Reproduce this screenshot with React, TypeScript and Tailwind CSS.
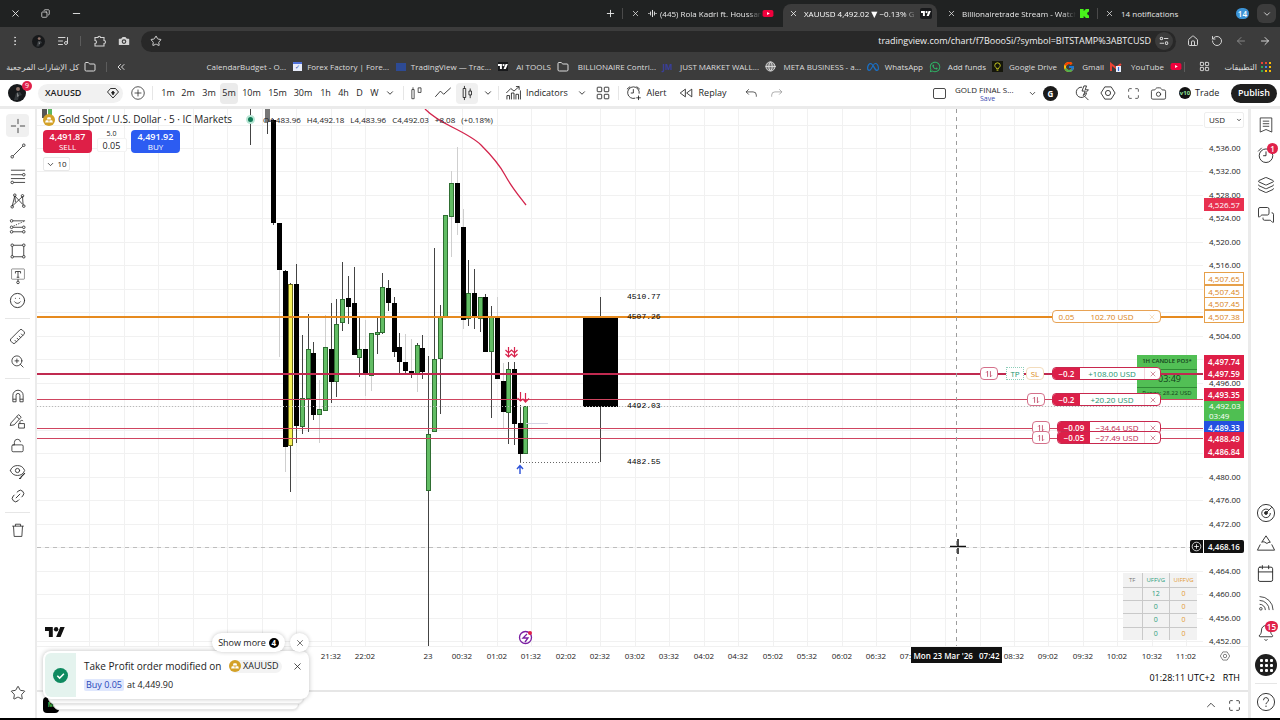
import type { ReactNode } from 'react'
import {
  ArrowLeft,
  ArrowRight,
  Bell,
  Calendar,
  Camera,
  ChevronDown,
  ChevronUp,
  ChevronsLeft,
  Copy,
  EllipsisVertical,
  Eye,
  Folder,
  Globe,
  House,
  Layers,
  LayoutGrid,
  Link2,
  ListMusic,
  LockOpen,
  Maximize,
  MessagesSquare,
  Minus,
  Plus,
  RotateCcw,
  Ruler,
  Smile,
  Star,
  X,
  ZoomIn,
} from 'lucide-react'
import { FcGoogle } from 'react-icons/fc'
import { FaMeta, FaWhatsapp } from 'react-icons/fa6'

/** Outline icon on a 28 unit box, the size the trading toolbars are drawn on. */
function Icon({ children, className = 'size-[18px]' }: { children: ReactNode; className?: string }) {
  return (
    <svg viewBox="0 0 28 28" fill="none" stroke="currentColor" strokeWidth="1.3" className={className}>
      {children}
    </svg>
  )
}

function TvLogo({ className }: { className: string }) {
  return (
    <svg viewBox="0 4 36 18" fill="currentColor" className={className}>
      <path d="M14 22H7V11H0V4h14v18zM28 22h-8l7.5-18h8L28 22z" />
      <circle cx="20" cy="8" r="4" />
    </svg>
  )
}

function YouTubeMark() {
  return (
    <svg viewBox="0 0 12 10" className="h-[9px] w-3 shrink-0">
      <rect y="1" width="12" height="8" rx="2" fill="#f0003c" />
      <path d="M5 3.2v3.6L8 5z" fill="#fff" />
    </svg>
  )
}

function GoldMark() {
  return (
    <svg viewBox="0 0 12 12" className="size-3 shrink-0">
      <circle cx="6" cy="6" r="6" fill="#d3a127" />
      <path d="M4.6 3.2h2.8l.8 2.2H3.8zM2.8 6.2h2.6l.5 2.3H2.1zM6.6 6.2h2.6l.7 2.3H6.1z" fill="#fff" />
    </svg>
  )
}

function Avatar({ className }: { className: string }) {
  return (
    <svg viewBox="0 0 18 18" className={className}>
      <circle cx="9" cy="9" r="9" fill="#17191b" />
      <circle cx="10" cy="5" r="2" fill="#8d7268" />
      <path d="M6 16l2-7 4-1 2 3-3 1-1 4z" fill="#34383b" />
      <path d="M9.5 8l1 4-1 1z" fill="#d5d5d5" />
    </svg>
  )
}

function SettingsIcon({ className }: { className?: string }) {
  return (
    <Icon className={className}>
      <path d="M9 4.5h10L25 14l-6 9.500H9L3 14z" />
      <circle cx="14" cy="14" r="4" />
    </Icon>
  )
}

/* ---------- browser chrome ---------- */

function TabStrip() {
  return (
    <div className="flex h-[27px] items-stretch bg-[#202222] text-[8px] text-[#e8e8e8]">
      <div className="flex items-center pl-1">
        <button aria-label="Close" className="flex w-[30px] justify-center pr-2"><X className="size-[11px]" /></button>
        <button aria-label="Restore" className="flex w-[23px] justify-center"><Copy className="size-[9px] -scale-x-100" /></button>
        <button aria-label="Minimize" className="flex w-[38px] justify-center"><Minus className="size-[11px]" /></button>
      </div>
      <button aria-label="New tab" className="ml-auto flex w-6 items-center justify-center"><Plus className="size-[11px]" /></button>
      <div className="my-2 w-px bg-[#4a4a4a]" />
      <div className="flex w-40 items-center pl-2">
        <X className="size-[9px] shrink-0" />
        <Icon className="ml-2 size-[9px] shrink-0">
          <path d="M1 14h4M8 8v12M14 3v22M20 8v12M23 14h4" strokeWidth="3" />
        </Icon>
        <span className="ml-[3px] w-[102px] overflow-hidden whitespace-nowrap [mask-image:linear-gradient(to_right,black_85%,transparent)]">
          (445) Rola Kadri ft. Houssam
        </span>
        <YouTubeMark />
      </div>
      <div className="mt-1 flex w-[154px] items-center rounded-t-lg bg-[#3c3c3c] pb-1 pl-[6px] text-white">
        <X className="size-[9px] shrink-0" />
        <span className="ml-[6px] w-[113px] overflow-hidden whitespace-nowrap [mask-image:linear-gradient(to_right,black_88%,transparent)]">
          XAUUSD 4,492.02 ▼ −0.13% G
        </span>
        <span className="ml-[3px] rounded-xs bg-[#18191b] px-px py-[3px]"><TvLogo className="h-[5px] w-[10px]" /></span>
      </div>
      <div className="flex w-[160px] items-center pl-[10px]">
        <X className="size-[9px] shrink-0" />
        <span className="ml-[6px] w-[114px] overflow-hidden whitespace-nowrap [mask-image:linear-gradient(to_right,black_88%,transparent)]">
          Billionairetrade Stream - Watch
        </span>
        <svg viewBox="0 0 10 10" className="ml-1 size-[9px] shrink-0" fill="#48f31b">
          <path d="M0 0h4v2h1V1h1V0h4v3H9v1H8v2h1v1h1v3H6V9H5V8H4v2H0z" />
        </svg>
      </div>
      <div className="my-2 w-px bg-[#4a4a4a]" />
      <div className="flex w-[155px] items-center pl-[7px]">
        <X className="size-[9px]" />
        <span className="ml-[7px]">14 notifications</span>
        <span className="mr-1 ml-auto rounded-full bg-[#3c93d6] px-[2px] leading-[11px] font-semibold text-white">14</span>
      </div>
      <button aria-label="Search tabs" className="mt-1 mr-1 ml-1 flex h-[19px] w-[19px] items-center justify-center rounded-md bg-[#3c3c3c]">
        <ChevronDown className="size-[10px]" />
      </button>
    </div>
  )
}

function AddressBar() {
  return (
    <div className="flex h-7 items-center bg-[#3c3c3c] text-[#d4d4d4]">
      <div className="flex w-[141px] items-center pl-[9px]">
        <EllipsisVertical className="size-3" />
        <Avatar className="ml-[11px] size-[13px]" />
        <ListMusic className="ml-3 size-3" />
        <span className="ml-[11px] h-[10px] w-px bg-[#5c5c5c]" />
        <Icon className="ml-3 size-[14px]">
          <path d="M4 7h6a2.500 2.500 0 0 1 5 0h7v6a3 3 0 0 1 0 6v5H4v-5a3 3 0 0 0 0-6z" strokeWidth="2.200" />
        </Icon>
        <Camera className="ml-[10px] size-[14px] fill-[#d4d4d4] stroke-[#3c3c3c]" />
      </div>
      <div className="flex h-[21px] min-w-0 flex-1 items-center rounded-full bg-[#282828] pr-[3px] pl-[9px]">
        <Star className="size-3" />
        <input
          aria-label="Address"
          dir="ltr"
          defaultValue="tradingview.com/chart/f7BoooSi/?symbol=BITSTAMP%3ABTCUSD"
          className="min-w-0 flex-1 bg-transparent pr-1 text-right text-[9px] text-[#f0f0f0] outline-none"
        />
        <button aria-label="Site settings" className="flex size-[18px] items-center justify-center rounded-full bg-[#3c3c3c]">
          <Icon className="size-3">
            <g strokeWidth="2.400">
              <circle cx="8" cy="8" r="3" /><path d="M14 8h10M4 19h10" /><circle cx="20" cy="19" r="3" />
            </g>
          </Icon>
        </button>
      </div>
      <div className="flex w-[104px] items-center justify-between pr-[9px] pl-[11px]">
        <House className="size-3" />
        <RotateCcw className="size-3" />
        <ArrowLeft className="size-3 text-[#858585]" />
        <ArrowRight className="size-3" />
      </div>
    </div>
  )
}

const BOOKMARKS = [
  { label: 'CalendarBudget - O...', width: 'w-[100px]', icon: <span className="flex size-[9px] items-center justify-center border-t-2 border-[#4f70d8] bg-[#e7ecfa] text-[6px] text-[#334ea8]">✓</span> },
  { label: 'Forex Factory | Fore...', width: 'w-[103px]', icon: <span className="h-[8px] w-[10px] bg-[#2d4a94]" /> },
  { label: 'TradingView — Trac...', width: 'w-[102px]', icon: <span className="bg-[#18191b] py-[2px] text-white"><TvLogo className="h-[5px] w-[10px]" /></span> },
  { label: 'AI TOOLS', width: 'w-[60px]', icon: <Folder className="size-3" /> },
  { label: 'BILLIONAIRE Contri...', width: 'w-[105px]', icon: <span className="font-bold text-[#3a3f9c]">JM</span> },
  { label: 'JUST MARKET WALL...', width: 'w-[103px]', icon: <Globe className="size-[11px] fill-[#777]" /> },
  { label: 'META BUSINESS - a...', width: 'w-[102px]', icon: <FaMeta className="size-3 text-[#1a6fc4]" /> },
  { label: 'WhatsApp', width: 'w-[62px]', icon: <FaWhatsapp className="size-3 text-[#2fb565]" /> },
  {
    label: 'Add funds', width: 'w-[63px]', icon: (
      <svg viewBox="0 0 12 12" className="size-[11px]">
        <rect width="12" height="12" fill="#15160c" />
        <path d="M3 5a3 3 0 0 1 6 0c0 1.500-2 2-2 3.500H5C5 7 3 6.500 3 5zM5 10h2" fill="none" stroke="#d3d321" />
      </svg>
    ),
  },
  { label: 'Google Drive', width: 'w-[71px]', icon: <FcGoogle className="size-3" /> },
  {
    label: 'Gmail', width: 'w-[47px]', icon: (
      <svg viewBox="0 0 12 10" className="h-[10px] w-3">
        <path d="M1 9V2l5 4 5-4" fill="none" stroke="#ea4335" strokeWidth="2" />
        <rect x="6" y="4" width="5" height="6" fill="#e8eefc" />
        <path d="M8.500 5v4" stroke="#3367d6" strokeWidth="1.200" />
      </svg>
    ),
  },
  { label: 'YouTube', width: 'w-[60px]', icon: <YouTubeMark /> },
]

const APP_DOTS = ['#ea4335', '#ea4335', '#fbbc05', '#34a853', '#4285f4', '#fbbc05', '#34a853', '#fbbc05', '#fbbc05']

function BookmarkBar() {
  return (
    <div className="flex h-[25px] items-center bg-[#3c3c3c] pb-[2px] text-[8px] whitespace-nowrap text-[#dcdcdc]">
      <a href="#all" dir="rtl" className="w-[80px] pr-px">كل الإشارات المرجعية</a>
      <Folder className="ml-1 size-3" />
      <span className="ml-[10px] h-[10px] w-px bg-[#5c5c5c]" />
      <ChevronsLeft className="ml-2 size-3" />
      <div className="ml-auto flex">
        {BOOKMARKS.map((b) => (
          <a key={b.label} href="#bookmark" className={`flex shrink-0 items-center justify-end ${b.width}`}>
            <span>{b.label}</span>
            <span className="ml-[5px] flex w-[13px] shrink-0 justify-center">{b.icon}</span>
          </a>
        ))}
      </div>
      <span className="ml-[2px] h-[10px] w-px bg-[#5c5c5c]" />
      <LayoutGrid className="ml-[14px] size-[11px]" />
      <a href="#apps" className="ml-2 flex w-[62px] items-center justify-end gap-1 pr-[9px]">
        <span dir="rtl">التطبيقات</span>
        <svg viewBox="0 0 10 10" className="size-[10px] shrink-0">
          {APP_DOTS.map((c, i) => (
            <rect key={i} x={(i % 3) * 4} y={Math.floor(i / 3) * 4} width="2" height="2" fill={c} />
          ))}
        </svg>
      </a>
    </div>
  )
}

/* ---------- top toolbar ---------- */

const INTERVALS = [
  { label: '1m', width: 'w-5' },
  { label: '2m', width: 'w-5' },
  { label: '3m', width: 'w-[22px]' },
  { label: '5m', width: 'w-[18px] rounded-sm bg-[#ebebeb]' },
  { label: '10m', width: 'w-[27px]' },
  { label: '15m', width: 'w-[25px]' },
  { label: '30m', width: 'w-[26px]' },
  { label: '1h', width: 'w-[19px]' },
  { label: '4h', width: 'w-[17px]' },
  { label: 'D', width: 'w-[15px]' },
  { label: 'W', width: 'w-[15px]' },
]

function Divider() {
  return <span className="h-[14px] w-px shrink-0 bg-[#e6e6e6]" />
}

function TopToolbar() {
  return (
    <div className="flex h-[29px] items-center border-b-3 border-[#ebebeb] bg-white text-[9px] whitespace-nowrap text-[#1c1c1c]">
      <div className="relative ml-2 size-[18px] shrink-0">
        <Avatar className="size-[18px]" />
        <span className="absolute -top-[3px] left-[14px] size-[10px] rounded-full bg-[#e0214a] text-center text-[7px] leading-[10px] text-white">9</span>
      </div>
      <button className="ml-3 flex h-[19px] w-[85px] shrink-0 items-center rounded-full bg-[#f1f1f1] pl-[7px] font-semibold">
        XAUUSD
        <Icon className="mr-[3px] ml-auto size-[14px]">
          <path d="M9 5h10l6 7-11 12L3 12z" strokeWidth="1.800" /><path d="M14 10l3 3-3 5-3-5z" fill="currentColor" />
        </Icon>
      </button>
      <button aria-label="Compare symbol" className="ml-[6px] flex w-[17px] justify-center">
        <Icon className="size-4"><circle cx="14" cy="14" r="11" /><path d="M14 8v12M8 14h12" /></Icon>
      </button>
      <span className="w-[6px]" />
      <Divider />
      <span className="w-[5px]" />
      {INTERVALS.map((i) => (
        <button key={i.label} className={`h-[21px] shrink-0 text-center ${i.width}`}>{i.label}</button>
      ))}
      <button aria-label="More intervals" className="flex w-[15px] justify-center"><ChevronDown className="size-[10px]" /></button>
      <span className="w-[6px]" />
      <Divider />
      <button aria-label="Bars" className="flex w-[26px] justify-center">
        <Icon className="size-4"><path d="M5 8h4v16H5zM7 8V4M16 5h5v8h-5z" /></Icon>
      </button>
      <button aria-label="Line" className="flex w-[26px] justify-center">
        <Icon><path d="M2 20l8-9 5 5L26 6" /></Icon>
      </button>
      <button aria-label="Candles" className="flex h-[21px] w-[22px] items-center justify-center rounded-sm bg-[#f0f0f0]">
        <Icon><path d="M8 7h4v14H8zM10 3v4M10 21v4M17 11h4v6h-4zM19 7v4M19 17v5" /></Icon>
      </button>
      <button aria-label="Chart types" className="flex w-5 items-center justify-center"><ChevronDown className="size-[10px]" /></button>
      <Divider />
      <button className="ml-[6px] flex items-center">
        <Icon><path d="M3 24v-6h4v6M10 24V14h4v10M17 24v-8h4v8M24 24V10M2 14l7-7 5 4 8-7M17 4h5v5" /></Icon>
        <span className="ml-[3px] w-[42px] text-left">Indicators</span>
      </button>
      <ChevronDown className="ml-[9px] size-[10px]" />
      <button aria-label="Templates" className="ml-[7px]">
        <Icon><rect x="5" y="5" width="7" height="7" rx="1" /><rect x="16" y="5" width="7" height="7" rx="1" /><rect x="5" y="16" width="7" height="7" rx="1" /><rect x="16" y="16" width="7" height="7" rx="1" /></Icon>
      </button>
      <span className="w-[6px]" />
      <Divider />
      <button className="ml-[6px] flex items-center">
        <Icon><path d="M22 15a9 9 0 1 0-6 7M13 8v6H9M3 8l5-4M18 4l5 4M21 18v7M17.500 21.500h7" /></Icon>
        <span className="ml-[3px] w-[21px]">Alert</span>
      </button>
      <button className="ml-[10px] flex items-center">
        <Icon><path d="M13 8v12l-8-6zM23 8v12l-8-6z" /></Icon>
        <span className="ml-[3px] w-[29px]">Replay</span>
      </button>
      <button aria-label="Undo" className="ml-[17px]">
        <Icon className="size-[15px]"><path d="M9 6l-5 5 5 5M4 11h13a6 6 0 0 1 6 6v3" /></Icon>
      </button>
      <button aria-label="Redo" className="ml-[10px] text-[#8c8c8c]">
        <Icon className="size-[15px]"><path d="M19 6l5 5-5 5M24 11H11a6 6 0 0 0-6 6v3" /></Icon>
      </button>

      <span className="ml-auto h-[11px] w-[13px] rounded-xs border border-[#4a4a4a]" />
      <button className="ml-[9px] w-[65px] text-left text-[8px] leading-[10px]">
        GOLD FINAL S...
        <span className="block text-center text-[7px] leading-[7px] text-[#3a4db0]">Save</span>
      </button>
      <ChevronDown className="ml-[8px] size-[9px]" />
      <span className="ml-[6px] size-[15px] rounded-full bg-[#1a1a1a] text-center text-[8px] leading-[15px] font-bold text-white">G</span>
      <button aria-label="Quick search" className="ml-[15px]">
        <Icon><path d="M14 5a8 8 0 1 0 7 9M18 19l6 6M17 3l-3 8h5l-3 7 8-9h-5l2-6z" /></Icon>
      </button>
      <button aria-label="Settings" className="ml-2"><SettingsIcon /></button>
      <button aria-label="Fullscreen" className="ml-[10px]"><Maximize className="size-[13px]" strokeWidth={1.3} /></button>
      <button aria-label="Snapshot" className="ml-[10px]"><Camera className="size-[17px]" strokeWidth={1.1} /></button>
      <button className="ml-3 flex h-[19px] w-[52px] items-center rounded-full">
        <span className="mr-1 size-3 rounded-full bg-[#111] text-center text-[6px] leading-[12px] font-bold text-[#8fe09a]">v10</span>
        Trade
      </button>
      <button className="mr-[3px] h-[19px] w-[46px] rounded-full bg-[#1f1f1f] font-semibold text-white">Publish</button>
    </div>
  )
}

/* ---------- side bars ---------- */

const DRAW_TOOLS = [
  { name: 'Trend line', icon: <Icon><circle cx="5" cy="23" r="2" /><circle cx="23" cy="5" r="2" /><path d="M6.500 21.500l15-15" /></Icon> },
  { name: 'Fib retracement', icon: <Icon><path d="M3 5h22M3 12h18M3 18h22M7 24h18" /><circle cx="23" cy="12" r="2" /><circle cx="5" cy="24" r="2" /></Icon> },
  { name: 'Pattern', icon: <Icon><path d="M5 22L9 6l12 13M5 22l16-15 1 14M9 6l1 10" /><circle cx="5" cy="23" r="2" /><circle cx="9" cy="5" r="2" /><circle cx="21" cy="6" r="2" /><circle cx="23" cy="22" r="2" /></Icon> },
  { name: 'Forecast', icon: <Icon><path d="M6 6h19M6 16h15M6 23h15" /><path d="M7 14l16-7" strokeDasharray="2 2" /><circle cx="4" cy="6" r="2" /><circle cx="4" cy="16" r="2" /><circle cx="23" cy="16" r="2" /><circle cx="4" cy="23" r="2" /><circle cx="23" cy="23" r="2" /></Icon> },
  { name: 'Rectangle', icon: <Icon><rect x="5" y="5" width="18" height="18" /><g fill="#fff"><circle cx="5" cy="5" r="2" /><circle cx="23" cy="5" r="2" /><circle cx="5" cy="23" r="2" /><circle cx="23" cy="23" r="2" /></g></Icon> },
  { name: 'Text', icon: <Icon><rect x="4" y="3" width="20" height="16" rx="1" opacity=".6" /><path d="M10 10V7h8v3M14 7v9M12 16h4M14 19v3" /><circle cx="14" cy="24" r="2" /></Icon> },
]

function ToolButton({ name, children }: { name: string; children: ReactNode }) {
  return (
    <button aria-label={name} className="flex h-[25px] w-full shrink-0 items-center justify-center">{children}</button>
  )
}

function LeftBar() {
  return (
    <nav className="flex w-[37px] shrink-0 flex-col items-center border-r-2 border-[#ebebeb] bg-white pt-[5px] text-[#2a2a2a]">
      <button aria-label="Cross" className="flex h-[23px] w-[23px] shrink-0 items-center justify-center rounded-sm bg-[#f0f0f0]">
        <Icon><path d="M14 3v8M14 17v8M3 14h8M17 14h8" /></Icon>
      </button>
      <div className="h-px" />
      {DRAW_TOOLS.map((t) => (
        <ToolButton key={t.name} name={t.name}>{t.icon}</ToolButton>
      ))}
      <ToolButton name="Icons"><Smile className="size-[17px]" strokeWidth={1.3} /></ToolButton>
      <span className="my-[5px] h-px w-[25px] shrink-0 bg-[#e6e6e6]" />
      <ToolButton name="Measure"><Ruler className="size-[17px] rotate-90" strokeWidth={1.2} /></ToolButton>
      <ToolButton name="Zoom in"><ZoomIn className="size-[15px]" strokeWidth={1.3} /></ToolButton>
      <span className="my-[4px] h-px w-[25px] shrink-0 bg-[#e6e6e6]" />
      <ToolButton name="Magnet">
        <Icon><path d="M6 23V13a8 8 0 0 1 16 0v10h-5V13a3 3 0 0 0-6 0v10zM6 19h5M17 19h5" /></Icon>
      </ToolButton>
      <ToolButton name="Stay in drawing mode">
        <Icon><path d="M3 17L15 4l4 4L8 20l-6 1zM12 7l4 4M15 18h9v7h-9zM17 18v-3a3 3 0 0 1 5-1" /></Icon>
      </ToolButton>
      <ToolButton name="Lock drawings"><LockOpen className="size-[15px]" strokeWidth={1.3} /></ToolButton>
      <ToolButton name="Hide drawings">
        <span className="relative">
          <Eye className="size-[17px]" strokeWidth={1.2} />
          <Icon className="absolute top-[10px] left-[9px] size-2"><path d="M4 22c6 3 6-4 8-6L24 4" strokeWidth="4" /></Icon>
        </span>
      </ToolButton>
      <ToolButton name="Sync"><Link2 className="size-4 -rotate-45" strokeWidth={1.3} /></ToolButton>
      <span className="my-[4px] h-px w-[25px] shrink-0 bg-[#e6e6e6]" />
      <ToolButton name="Remove">
        <Icon><path d="M5 8h18M10 8V5h8v3M7 8l1 16h12l1-16" /></Icon>
      </ToolButton>
      <div className="mt-auto pb-[13px]">
        <ToolButton name="Favorites"><Star className="size-4" strokeWidth={1.3} /></ToolButton>
      </div>
    </nav>
  )
}

function SideButton({ name, badge, children }: { name: string; badge?: string; children: ReactNode }) {
  return (
    <button aria-label={name} className="relative flex h-[30px] w-full shrink-0 items-center justify-center">
      {children}
      {badge && (
        <span className="absolute top-[3px] right-[2px] min-w-[11px] rounded-full bg-[#e0214a] px-[2px] text-[8px] leading-[11px] font-semibold text-white">
          {badge}
        </span>
      )}
    </button>
  )
}

function RightBar() {
  return (
    <nav className="flex w-8 shrink-0 flex-col border-l-3 border-[#ebebeb] bg-white pt-px pb-px text-[#2a2a2a]">
      <SideButton name="Watchlist"><Icon><path d="M5 3h18v22l-9-4-9 4zM9 8h10M9 12h10M9 16h10" /></Icon></SideButton>
      <SideButton name="Alerts" badge="1">
        <Icon className="size-5"><circle cx="14" cy="15" r="9.500" /><path d="M14 9v6h-4M3 9l5-5M20 4l5 5" /></Icon>
      </SideButton>
      <SideButton name="Layers"><Layers className="size-[18px]" strokeWidth={1.2} /></SideButton>
      <SideButton name="Chats"><MessagesSquare className="size-[18px]" strokeWidth={1.2} /></SideButton>
      <div className="mt-auto" />
      <SideButton name="Screener">
        <Icon className="size-5"><circle cx="14" cy="14" r="12" /><path d="M18 10a6 6 0 1 0 2 4M14 14l8-8" /><circle cx="14" cy="14" r="2" fill="currentColor" /></Icon>
      </SideButton>
      <SideButton name="Ideas">
        <Icon className="size-5"><path d="M8 13l6-9 6 9c-3-1-4 3-6 1s-4-2-6-1zM6 16l-4 8h24l-4-8" /></Icon>
      </SideButton>
      <SideButton name="Calendar"><Calendar className="size-[19px]" strokeWidth={1.2} /></SideButton>
      <SideButton name="News">
        <Icon><path d="M4 4a21 21 0 0 1 21 21M4 10a15 15 0 0 1 15 15M4 16a9 9 0 0 1 9 9" /><circle cx="6" cy="23" r="2" /></Icon>
      </SideButton>
      <SideButton name="Notifications" badge="15"><Bell className="size-[18px]" strokeWidth={1.2} /></SideButton>
      <span className="h-[2px]" />
      <SideButton name="Products">
        <svg viewBox="0 0 22 22" className="size-[22px]">
          <circle cx="11" cy="11" r="11" fill="#1f1f1f" />
          {[0, 1, 2, 3, 4, 5, 6, 7, 8].map((i) => (
            <rect key={i} x={5 + (i % 3) * 5} y={5 + Math.floor(i / 3) * 5} width="3" height="3" rx="1" fill="#fff" />
          ))}
        </svg>
      </SideButton>
      <span className="mx-auto my-[3px] h-px w-[22px] bg-[#e6e6e6]" />
      <SideButton name="Help">
        <Icon className="size-5"><circle cx="14" cy="14" r="12" /><path d="M10.500 11.500a3.500 3.500 0 1 1 5 3c-1 .6-1.500 1.200-1.500 2.500M14 19v2" /></Icon>
      </SideButton>
    </nav>
  )
}

/* ---------- chart ---------- */

type Tone = 'k' | 'g' | 'y'
// x, high, body top, body bottom, low, tone, faint wick above / below
type Candle = [number, number, number, number, number, Tone, string?]

const CANDLES: Candle[] = [
  [235, 10, 11, 114, 116, 'k'],
  [241, 114, 114, 161, 248, 'k', 'b'],
  [247, 161, 162, 338, 363, 'k', 'b'],
  [252, 174, 175, 337, 383, 'y'],
  [258, 155, 175, 317, 334, 'k'],
  [264, 226, 289, 318, 325, 'g'],
  [270, 205, 240, 290, 323, 'g'],
  [275, 233, 244, 306, 311, 'k'],
  [281, 271, 300, 306, 334, 'g', 'tb'],
  [287, 206, 238, 302, 302, 'g', 't'],
  [293, 194, 240, 273, 294, 'k'],
  [298, 190, 215, 273, 288, 'g'],
  [304, 153, 190, 214, 222, 'g'],
  [310, 167, 189, 198, 215, 'k'],
  [316, 158, 194, 246, 246, 'k'],
  [321, 209, 240, 249, 268, 'g'],
  [327, 211, 240, 265, 287, 'k', 'tb'],
  [333, 224, 224, 267, 282, 'g', 'b'],
  [339, 209, 223, 226, 245, 'g'],
  [344, 164, 178, 224, 225, 'g'],
  [350, 171, 179, 194, 202, 'k'],
  [356, 188, 194, 243, 248, 'k'],
  [361, 224, 238, 253, 265, 'k'],
  [367, 225, 253, 262, 264, 'k', 't'],
  [373, 230, 262, 265, 269, 'k', 't'],
  [379, 234, 236, 265, 283, 'g', 'b'],
  [384, 226, 239, 263, 270, 'k'],
  [390, 247, 325, 382, 537, 'g'],
  [396, 139, 250, 323, 323, 'g'],
  [402, 196, 208, 250, 305, 'g'],
  [407, 106, 106, 208, 208, 'g'],
  [413, 62, 74, 108, 148, 'g', 'tb'],
  [419, 38, 74, 114, 126, 'k', 'tb'],
  [425, 100, 118, 211, 220, 'k', 'tb'],
  [430, 151, 184, 210, 217, 'g'],
  [436, 160, 184, 209, 220, 'k'],
  [442, 188, 188, 210, 223, 'g'],
  [447, 185, 188, 243, 243, 'k'],
  [453, 197, 208, 243, 309, 'g'],
  [459, 188, 208, 270, 270, 'k', 't'],
  [465, 254, 272, 303, 319, 'k', 'tb'],
  [470, 253, 260, 304, 335, 'g'],
  [476, 253, 260, 315, 336, 'k'],
  [482, 296, 314, 345, 353, 'k'],
  [487, 297, 297, 345, 345, 'g'],
]

const FILL: Record<Tone, string> = { k: '#000000', g: '#62bd64', y: '#f7f25a' }
const EDGE: Record<Tone, string> = { k: '#000000', g: '#2f6e32', y: '#6e6c1c' }

const GRID_X = [51, 86, 120, 155, 189, 224, 258, 293, 327, 390, 424, 459, 493, 528, 562, 597, 631, 666, 700, 735, 769, 804, 838, 872, 907, 942, 976, 1010, 1045, 1079, 1114, 1148]
const TOP_PRICE = 4540

function priceY(price: number) {
  return Math.round((4536 - price) * 5.87 + 39)
}

const GRID_Y = Array.from({ length: 23 }, (_, i) => priceY(TOP_PRICE - i * 4))

const LEVELS = [
  { y: 208, color: '#e68a1f', size: 2 },
  { y: 265, color: '#c02a50', size: 2 },
  { y: 290.5, color: '#cf4560', size: 1 },
  { y: 319.5, color: '#cf4560', size: 1 },
  { y: 329.5, color: '#cf4560', size: 1 },
]

function ChartGrid() {
  return (
    <svg className="absolute inset-0 size-full" stroke="#f1f1f1">
      {GRID_X.map((x) => <line key={x} x1={x + 1.5} x2={x + 1.5} y1="0" y2="100%" />)}
      {GRID_Y.map((y) => <line key={y} x1="0" x2="100%" y1={y + 0.5} y2={y + 0.5} />)}
    </svg>
  )
}

function ChartDrawing() {
  return (
    <svg className="absolute inset-0 size-full overflow-visible">
      <g transform="translate(1 0)">
        <rect x="4" width="5" height="9" fill="#555" />
        <rect x="10" width="4" height="8" fill="#5cb85f" />
        <path d="M212.500 0v36M229.500 0v25" stroke="#444" />
        <rect x="227" width="5" height="13" fill="#777" />
        {CANDLES.map(([x, high, top, bottom, low, tone, faint = '']) => (
          <g key={x}>
            <line x1={x + 0.5} x2={x + 0.5} y1={high} y2={top} stroke={faint.includes('t') ? '#cfcfcf' : '#444'} />
            <line x1={x + 0.5} x2={x + 0.5} y1={bottom} y2={low} stroke={faint.includes('b') ? '#cfcfcf' : '#444'} />
            <rect x={x - 1.5} y={top + 0.5} width="4" height={Math.max(bottom - top - 1, 1)} fill={FILL[tone]} stroke={EDGE[tone]} />
          </g>
        ))}
        <path d="M387 0C395 8 404 13 414 18S436 29 443 36S460 53 467 66S482 88 488 96" fill="none" stroke="#d3244c" strokeWidth="1.300" />
        <path d="M562.500 188v165" stroke="#444" />
        <rect x="545" y="209" width="35" height="89" fill="#000" />
        <path d="M482 353.500h80" stroke="#666" strokeDasharray="1 2" />
        <path d="M488 314.500h22" stroke="#d4d4e4" />
      </g>
      <line x1="0" x2="100%" y1="297.500" y2="297.500" stroke="#b9b9b9" strokeDasharray="1 2" />
      {LEVELS.map((l) => (
        <line key={l.y} x1="0" x2="100%" y1={l.y} y2={l.y} stroke={l.color} strokeWidth={l.size} />
      ))}
      <g transform="translate(1 0)">
        <g fill="none" stroke="#d8234d" strokeWidth="1.200">
          <path d="M470.500 238v9M476.500 238v9M467.500 241l3 3 3-3 3 3 3-3M467.500 245l3 3 3-3 3 3 3-3" />
          <path d="M482.500 283v9M487.500 284v9M479.500 289l3 3 2.500-2 2.500 3 3.500-3.500" />
        </g>
        <path d="M482 365v-8M479 360l3-3.500 3 3.500" fill="none" stroke="#2b50d8" strokeWidth="1.400" />
        <line x1="918.500" x2="918.500" y1="0" y2="100%" stroke="#9c9c9c" strokeDasharray="4 4" />
        <path d="M912 437.500h16M920 430v15" stroke="#111" strokeWidth="1.500" />
        <g fill="none" stroke="#7a1fa2" strokeWidth="1.300">
          <circle cx="487.500" cy="528.500" r="6" />
          <path d="M489 525l-4 4h5l-3 4" />
        </g>
        <circle cx="492" cy="524" r="2" fill="#e0214a" />
      </g>
      <line x1="0" x2="100%" y1="438.500" y2="438.500" stroke="#bdbdbd" strokeDasharray="4 4" />
    </svg>
  )
}

const PO3_LABELS = [
  { top: 'top-[182px]', text: '4510.77' },
  { top: 'top-[202px]', text: '4507.26' },
  { top: 'top-[291px]', text: '4492.03' },
  { top: 'top-[347px]', text: '4482.55' },
]

function OrderPill({ qty, pnl, loss, wide }: { qty: string; pnl: string; loss?: boolean; wide?: boolean }) {
  return (
    <div className={`flex h-[13px] overflow-hidden rounded-sm border border-[#c8284e] bg-white ${wide ? 'w-[104px]' : 'w-[109px]'}`}>
      <span className={`bg-[#dc1f49] text-center font-semibold text-white ${wide ? 'w-8' : 'w-[27px]'}`}>{qty}</span>
      <span className={`flex-1 text-center ${loss ? 'text-[#c02a50]' : 'text-[#1c9470]'}`}>{pnl}</span>
      <button aria-label="Close position" className="flex w-4 items-center justify-center border-l border-[#f0d5dc] text-[#b85a70]">
        <X className="size-2" />
      </button>
    </div>
  )
}

function ReverseButton() {
  return (
    <button aria-label="Reverse position" className="flex h-[13px] w-[18px] items-center justify-center rounded-sm border border-[#d4708a] bg-white text-[#b93a5a]">
      <Icon className="size-[10px]"><path d="M10 22V6L6 10M18 6v16l4-4" strokeWidth="2.200" /></Icon>
    </button>
  )
}

function Orders() {
  return (
    <div className="text-[8px] leading-[11px]">
      <div className="absolute top-[201px] right-[42px] flex h-[13px] w-[109px] rounded-sm border border-[#e8a355] bg-white text-[#d98420]">
        <span className="w-[27px] text-center">0.05</span>
        <span className="flex-1 text-center">102.70 USD</span>
        <button aria-label="Cancel order" className="flex w-4 items-center justify-center text-[#f0cfa6]"><X className="size-2" /></button>
      </div>
      <div className="absolute top-[258px] right-[42px] flex items-center">
        <ReverseButton />
        <span className="ml-2 h-[13px] w-[18px] border border-dotted border-[#8ccdb8] bg-white text-center text-[#1c9470]">TP</span>
        <span className="mr-2 ml-[2px] h-[13px] w-[18px] rounded-sm border border-[#f3dcbc] bg-white text-center text-[#dc8a20]">SL</span>
        <OrderPill qty="−0.2" pnl="+108.00 USD" />
      </div>
      <div className="absolute top-[284px] right-[42px] flex items-center gap-[7px]">
        <ReverseButton />
        <OrderPill qty="−0.2" pnl="+20.20 USD" />
      </div>
      <div className="absolute top-[312px] right-[42px] flex items-center gap-[7px]">
        <ReverseButton />
        <OrderPill qty="−0.09" pnl="−34.64 USD" loss wide />
      </div>
      <div className="absolute top-[322px] right-[42px] flex items-center gap-[7px]">
        <ReverseButton />
        <OrderPill qty="−0.05" pnl="−27.49 USD" loss wide />
      </div>
    </div>
  )
}

const GAP_COUNTS = [12, 0, 0, 0]
const OHLC = ['O4,483.96', 'H4,492.18', 'L4,483.96', 'C4,492.03', '+8.08', '(+0.18%)']

function Legend() {
  return (
    <div className="absolute top-[3px] left-[6px] text-[#222]">
      <div className="flex h-[15px] items-center whitespace-nowrap">
        <GoldMark />
        <span className="ml-[3px] w-[183px] text-[10px]">Gold Spot / U.S. Dollar · 5 · IC Markets</span>
        <span className="ml-[5px] size-[9px] rounded-full border-2 border-[#b9e6d5] bg-[#0f7a55]" />
        <span className="ml-[8px] flex gap-[6px] text-[8px]">
          {OHLC.map((v) => <span key={v}>{v}</span>)}
        </span>
      </div>
      <div className="mt-[3px] flex text-[8px]">
        <button className="h-[23px] w-[49px] rounded-sm bg-[#de1f47] leading-[9px] text-white">
          <span className="block text-[9px] leading-[10px] font-semibold">4,491.87</span>SELL
        </button>
        <div className="w-[39px] text-center">
          <div className="h-2 text-[7px] leading-[8px]">5.0</div>
          <input aria-label="Lot size" defaultValue="0.05" className="h-[14px] w-[30px] rounded-xs border border-[#f3f3f3] bg-white text-center text-[9px] outline-none" />
        </div>
        <button className="h-[23px] w-[49px] rounded-sm bg-[#2c5cf2] leading-[9px] text-white">
          <span className="block text-[9px] leading-[10px] font-semibold">4,491.92</span>BUY
        </button>
      </div>
      <button className="mt-1 flex h-[14px] w-[27px] items-center justify-center gap-[2px] rounded-xs border border-[#e8e8e8] bg-white text-[8px]">
        <ChevronDown className="size-[9px]" />10
      </button>
    </div>
  )
}

function Chart() {
  return (
    <div className="relative min-w-0 flex-1 overflow-hidden bg-white">
      <ChartGrid />
      <table className="absolute top-[246px] right-[6px] h-[45px] w-[60px] bg-[#52bf55] text-[6px] leading-[9px] text-[#12401a]">
        <tbody>
          <tr className="border-b border-[#2f8a35]"><td className="h-[14px] text-center font-semibold whitespace-nowrap">1H CANDLE PO3*</td></tr>
          <tr className="border-b border-[#2f8a35]"><td className="h-[18px] pr-4 text-right text-[9px]">03:49</td></tr>
          <tr><td className="text-center whitespace-nowrap">Range: 28.22 USD</td></tr>
        </tbody>
      </table>
      <ChartDrawing />
      <Legend />
      {PO3_LABELS.map((l) => (
        <span key={l.text} className={`absolute left-[590px] font-['Liberation_Mono',monospace] text-[8px] leading-[12px] text-black ${l.top}`}>{l.text}</span>
      ))}
      <Orders />
      <table className="absolute top-[464px] right-[6px] h-[67px] w-[74px] table-fixed bg-[#f2f2f2] text-center text-[7px] leading-[10px]">
        <thead>
          <tr className="text-[6px] text-[#2b9d7c]">
            <th className="h-[14px] w-[19px] font-normal text-[#777]">TF</th>
            <th className="border-x border-[#c9c9c9] font-normal">UFFVG</th>
            <th className="font-normal text-[#e39a35]">UIFFVG</th>
          </tr>
        </thead>
        <tbody>
          {GAP_COUNTS.map((n, i) => (
            <tr key={i} className="border-t border-[#c9c9c9]">
              <td />
              <td className="border-x border-[#c9c9c9] text-[#2b9d7c]">{n}</td>
              <td className="text-[#e39a35]">0</td>
            </tr>
          ))}
        </tbody>
      </table>
      <TvLogo className="absolute top-[518px] left-[8px] h-[10px] w-5 text-[#111]" />
      <span className="absolute top-[431px] right-0 flex size-[13px] items-center justify-center rounded-l-xs bg-[#111] text-white">
        <Icon className="size-[11px]"><g strokeWidth="2"><circle cx="14" cy="14" r="11" /><path d="M14 8v12M8 14h12" /></g></Icon>
      </span>
    </div>
  )
}

const AXIS_PRICES = [4536, 4532, 4528, 4524, 4520, 4516, 4504, 4496, 4480, 4476, 4472, 4464, 4460, 4456, 4452]

const PRICE_TAGS = [
  { y: 89, text: '4,526.57', tone: 'bg-[#e8304f] text-white' },
  { y: 163, text: '4,507.65', tone: 'border border-[#e6a04a] bg-white text-[#d98420]' },
  { y: 176, text: '4,507.45', tone: 'border border-[#e6a04a] bg-white text-[#d98420]' },
  { y: 188, text: '4,507.45', tone: 'border border-[#e6a04a] bg-white text-[#d98420]' },
  { y: 201, text: '4,507.38', tone: 'border border-[#e6a04a] bg-white text-[#d98420]' },
  { y: 246, text: '4,497.74', tone: 'bg-[#de1f47] font-semibold text-white' },
  { y: 258, text: '4,497.59', tone: 'bg-[#de1f47] font-semibold text-white' },
  { y: 279, text: '4,493.35', tone: 'bg-[#de1f47] font-semibold text-white' },
  { y: 312, text: '4,489.33', tone: 'bg-[#2450e0] font-semibold text-white' },
  { y: 323, text: '4,488.49', tone: 'bg-[#de1f47] font-semibold text-white' },
  { y: 336, text: '4,486.84', tone: 'bg-[#de1f47] font-semibold text-white' },
  { y: 431, text: '4,468.16', tone: 'rounded-r-xs bg-[#111] font-semibold text-white' },
]

function PriceAxis() {
  return (
    <div className="relative w-[45px] shrink-0 bg-white text-[8px] leading-[12px] text-[#222]">
      <label className="absolute top-[3px] left-[1px] z-10 flex items-center">
        <span className="sr-only">Currency</span>
        <select className="h-4 w-10 appearance-none rounded-xs border border-[#eee] bg-white pl-1 text-[8px]">
          <option>USD</option>
        </select>
        <ChevronDown className="-ml-2 size-[6px]" strokeWidth={3} />
      </label>
      {AXIS_PRICES.map((p) => (
        <span key={p} className="absolute left-[6px]" style={{ top: priceY(p) - 6 }}>
          {p.toLocaleString('en-US')}.00
        </span>
      ))}
      {PRICE_TAGS.map((t) => (
        <span key={t.y} className={`absolute left-px flex h-[13px] w-10 items-center justify-center ${t.tone}`} style={{ top: t.y }}>
          {t.text}
        </span>
      ))}
      <span className="absolute top-[292px] left-px h-[20px] w-10 bg-[#4fbf52] pl-[5px] leading-[10px] text-white">
        4,492.03<br />03:49
      </span>
    </div>
  )
}

const TIME_LABELS = [
  [293, '21:32'], [327, '22:02'], [390, '23'], [424, '00:32'], [459, '01:02'], [493, '01:32'], [528, '02:02'],
  [562, '02:32'], [597, '03:02'], [631, '03:32'], [666, '04:02'], [700, '04:32'], [735, '05:02'], [769, '05:32'],
  [804, '06:02'], [838, '06:32'], [872, '07:02'], [976, '08:32'], [1010, '09:02'], [1045, '09:32'],
  [1079, '10:02'], [1114, '10:32'], [1148, '11:02'],
] as const

function TimeAxis() {
  return (
    <div className="relative h-[18px] shrink-0 border-t border-[#f1f1f1] bg-white text-[8px] leading-[17px] text-[#222]">
      {TIME_LABELS.map(([x, text]) => (
        <span key={text} className="absolute top-0 -translate-x-1/2" style={{ left: x + 1 }}>{text}</span>
      ))}
      <span className="absolute top-0 left-[874px] h-4 w-[91px] bg-[#111] text-center leading-[17px] font-semibold whitespace-pre text-white">
        {"Mon 23 Mar '26   07:42"}
      </span>
      <button aria-label="Axis settings" className="absolute top-[3px] right-[17px]"><SettingsIcon className="size-3" /></button>
    </div>
  )
}

function Toast() {
  return (
    <div className="absolute bottom-[8px] left-[6px] w-[266px] text-[#222]">
      <span className="absolute bottom-[-3px] left-0 flex size-4 items-center justify-center rounded-sm bg-black text-[7px] font-bold text-[#4fbf52]">M</span>
      <div className="absolute bottom-0 left-[10px] h-5 w-[246px] rounded-md border border-[#e6e6e6] bg-white shadow-sm" />
      <div className="absolute bottom-[6px] left-[5px] h-5 w-[256px] rounded-md border border-[#e6e6e6] bg-white shadow-sm" />
      <div className="relative mb-[11px] flex h-[48px] rounded-lg bg-white p-[2px] shadow-[0_0_5px_rgba(0,0,0,0.25)]">
        <div className="flex w-[31px] shrink-0 items-center justify-center rounded-l-md bg-[#e4f3ee]">
          <svg viewBox="0 0 14 14" className="size-[15px]">
            <circle cx="7" cy="7" r="7" fill="#0f8a60" />
            <path d="M4 7.200l2.200 2.200L10.200 5.400" fill="none" stroke="#fff" strokeWidth="1.400" />
          </svg>
        </div>
        <div className="flex-1 pt-[5px] pl-2 text-[10px] leading-[16px] whitespace-nowrap">
          <div className="flex items-center">
            <span className="w-[141px]">Take Profit order modified on</span>
            <span className="ml-1 flex h-[13px] items-center gap-[2px] rounded-full bg-[#f3f3f3] pr-1 text-[9px]"><GoldMark />XAUUSD</span>
            <button aria-label="Dismiss" className="mr-1 ml-auto"><X className="size-[11px]" strokeWidth={1.7} /></button>
          </div>
          <div className="mt-[5px] flex items-center text-[9px] leading-[12px]">
            <span className="rounded-xs bg-[#dfe7fd] px-[2px] text-[#2846b8]">Buy 0.05</span>
            <span className="ml-[3px]">at 4,449.90</span>
          </div>
        </div>
      </div>
      <div className="absolute -top-[18px] right-0 flex items-center gap-[5px]">
        <button className="flex h-[19px] w-[73px] items-center justify-center gap-[3px] rounded-full bg-white text-[9px] shadow-[0_0_4px_rgba(0,0,0,0.22)]">
          Show more
          <span className="size-[10px] rounded-full bg-black text-[8px] leading-[10px] font-bold text-white">4</span>
        </button>
        <button aria-label="Close all" className="flex size-[19px] items-center justify-center rounded-full bg-white shadow-[0_0_4px_rgba(0,0,0,0.22)]">
          <X className="size-[10px]" strokeWidth={1.5} />
        </button>
      </div>
    </div>
  )
}

export default function App() {
  return (
    <div className="flex min-h-screen flex-col overflow-hidden border-b-2 border-black bg-white font-['Open_Sans','Noto_Sans','DejaVu_Sans',sans-serif]">
      <header>
        <TabStrip />
        <AddressBar />
        <BookmarkBar />
      </header>
      <TopToolbar />
      <main className="flex flex-1 items-stretch">
        <LeftBar />
        <section className="relative flex min-w-0 flex-1 flex-col">
          <div className="flex flex-1">
            <Chart />
            <PriceAxis />
          </div>
          <TimeAxis />
          <div className="flex h-[26px] shrink-0 items-center justify-end gap-2 pt-[2px] pr-2 text-[9px]">
            <button>01:28:11 UTC+2</button>
            <button>RTH</button>
          </div>
          <div className="flex h-7 shrink-0 items-center justify-end gap-[10px] border-t-2 border-[#e6e6e6] pr-[7px]">
            <button aria-label="Open panel"><ChevronUp className="size-[14px]" strokeWidth={1.2} /></button>
            <button aria-label="Maximize panel"><Maximize className="size-[13px]" strokeWidth={1.3} /></button>
          </div>
          <Toast />
        </section>
        <RightBar />
      </main>
    </div>
  )
}
